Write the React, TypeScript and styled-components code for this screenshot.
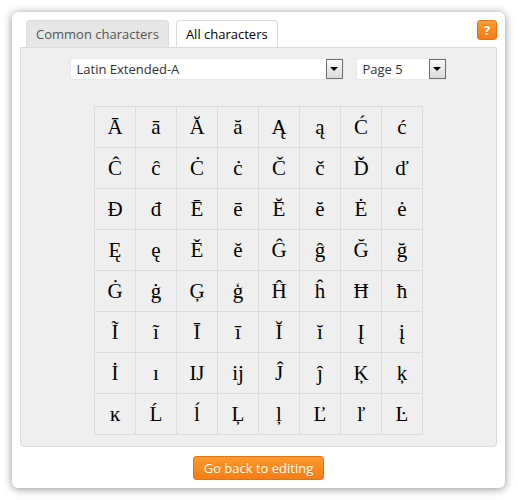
import React from "react";
import styled, { createGlobalStyle } from "styled-components";

const rows: string[][] = [
	["Ā", "ā", "Ă", "ă", "Ą", "ą", "Ć", "ć"],
	["Ĉ", "ĉ", "Ċ", "ċ", "Č", "č", "Ď", "ď"],
	["Đ", "đ", "Ē", "ē", "Ĕ", "ĕ", "Ė", "ė"],
	["Ę", "ę", "Ě", "ě", "Ĝ", "ĝ", "Ğ", "ğ"],
	["Ġ", "ġ", "Ģ", "ģ", "Ĥ", "ĥ", "Ħ", "ħ"],
	["Ĩ", "ĩ", "Ī", "ī", "Ĭ", "ĭ", "Į", "į"],
	["İ", "ı", "Ĳ", "ĳ", "Ĵ", "ĵ", "Ķ", "ķ"],
	["ĸ", "Ĺ", "ĺ", "Ļ", "ļ", "Ľ", "ľ", "Ŀ"],
];

const Global = createGlobalStyle`
	body {
		margin: 0;
		background: #fff;
		font-family: "Open Sans", "Liberation Sans", sans-serif;
	}
`;

const App: React.FC = () => {
	return (
		<Page>
			<Global />
			<Dialog>
				<TabRow>
					<Tab>Common characters</Tab>
					<Tab $active>All characters</Tab>
					<Spacer />
					<HelpButton>?</HelpButton>
				</TabRow>

				<Panel>
					<SelectRow>
						<Select $width={274}>
							<SelectText>Latin Extended-A</SelectText>
							<Arrow />
						</Select>
						<Select $width={91}>
							<SelectText>Page 5</SelectText>
							<Arrow />
						</Select>
					</SelectRow>

					<CharGrid>
						{rows.flat().map((ch, i) => (
							<Cell key={i}>{ch}</Cell>
						))}
					</CharGrid>
				</Panel>

				<Footer>
					<BackButton>Go back to editing</BackButton>
				</Footer>
			</Dialog>
		</Page>
	);
};

const Page = styled.div`
	padding: 12px;
`;

const Dialog = styled.div`
	width: 493px;
	height: 476px;
	box-sizing: border-box;
	padding: 8px;
	background: #fff;
	border-radius: 6px;
	box-shadow: 0 1px 9px rgba(0, 0, 0, 0.45);
	display: flex;
	flex-direction: column;
`;

//TABS
const TabRow = styled.div`
	display: flex;
	align-items: flex-start;
	gap: 7px;
	padding-left: 6px;
	height: 27px;
`;

const Tab = styled.div<{ $active?: boolean }>`
	height: 27px;
	box-sizing: border-box;
	padding: 0 9px;
	display: flex;
	align-items: center;
	font-size: 13px;
	color: ${(p) => (p.$active ? "#000" : "#555")};
	background: ${(p) => (p.$active ? "#fff" : "#e6e6e6")};
	border: 1px solid #dcdcdc;
	border-bottom: none;
	border-radius: 4px 4px 0 0;
`;

const Spacer = styled.div`
	flex: 1;
`;

const HelpButton = styled.div`
	width: 20px;
	height: 20px;
	box-sizing: border-box;
	border: 1px solid #e07412;
	border-radius: 3px;
	background: linear-gradient(#fd9d33, #f47b13);
	color: #fff;
	font-weight: bold;
	font-size: 13px;
	display: flex;
	align-items: center;
	justify-content: center;
	text-shadow: 0 -1px 0 rgba(0, 0, 0, 0.15);
`;

//PANEL
const Panel = styled.div`
	height: 400px;
	box-sizing: border-box;
	background: #efefef;
	border: 1px solid #dcdcdc;
	border-radius: 0 0 4px 4px;
	padding-top: 10px;
	display: flex;
	flex-direction: column;
	align-items: center;
`;

const SelectRow = styled.div`
	display: flex;
	gap: 12px;
	margin-left: -1px;
`;

const Select = styled.div<{ $width: number }>`
	width: ${(p) => p.$width}px;
	height: 22px;
	box-sizing: border-box;
	background: #fff;
	border: 1px solid #e8e8e8;
	border-radius: 3px;
	display: flex;
	align-items: center;
	padding-left: 6px;
`;

const SelectText = styled.span`
	flex: 1;
	font-size: 13px;
	color: #333;
`;

const Arrow = styled.div`
	width: 17px;
	height: 20px;
	box-sizing: border-box;
	border: 1px solid #6f6f6f;
	background: linear-gradient(#fafafa, #d9d9d9);
	display: flex;
	align-items: center;
	justify-content: center;

	&::after {
		content: "";
		border-left: 4px solid transparent;
		border-right: 4px solid transparent;
		border-top: 4px solid #000;
	}
`;

const CharGrid = styled.div`
	margin-top: 26px;
	display: grid;
	grid-template-columns: repeat(8, 41px);
	grid-auto-rows: 41px;
	border-top: 1px solid #dcdcdc;
	border-left: 1px solid #dcdcdc;
`;

const Cell = styled.div`
	border-right: 1px solid #dcdcdc;
	border-bottom: 1px solid #dcdcdc;
	display: flex;
	align-items: center;
	justify-content: center;
	font-family: "Liberation Serif", "DejaVu Serif", serif;
	font-size: 21px;
	color: #000;
`;

//FOOTER
const Footer = styled.div`
	display: flex;
	justify-content: center;
	padding-top: 9px;
`;

const BackButton = styled.div`
	height: 24px;
	box-sizing: border-box;
	padding: 0 10px;
	border: 1px solid #e07412;
	border-radius: 3px;
	background: linear-gradient(#fd9a2e, #f57d14);
	color: #fff;
	font-size: 13px;
	display: flex;
	align-items: center;
	text-shadow: 0 -1px 0 rgba(0, 0, 0, 0.1);
`;

export default App;
